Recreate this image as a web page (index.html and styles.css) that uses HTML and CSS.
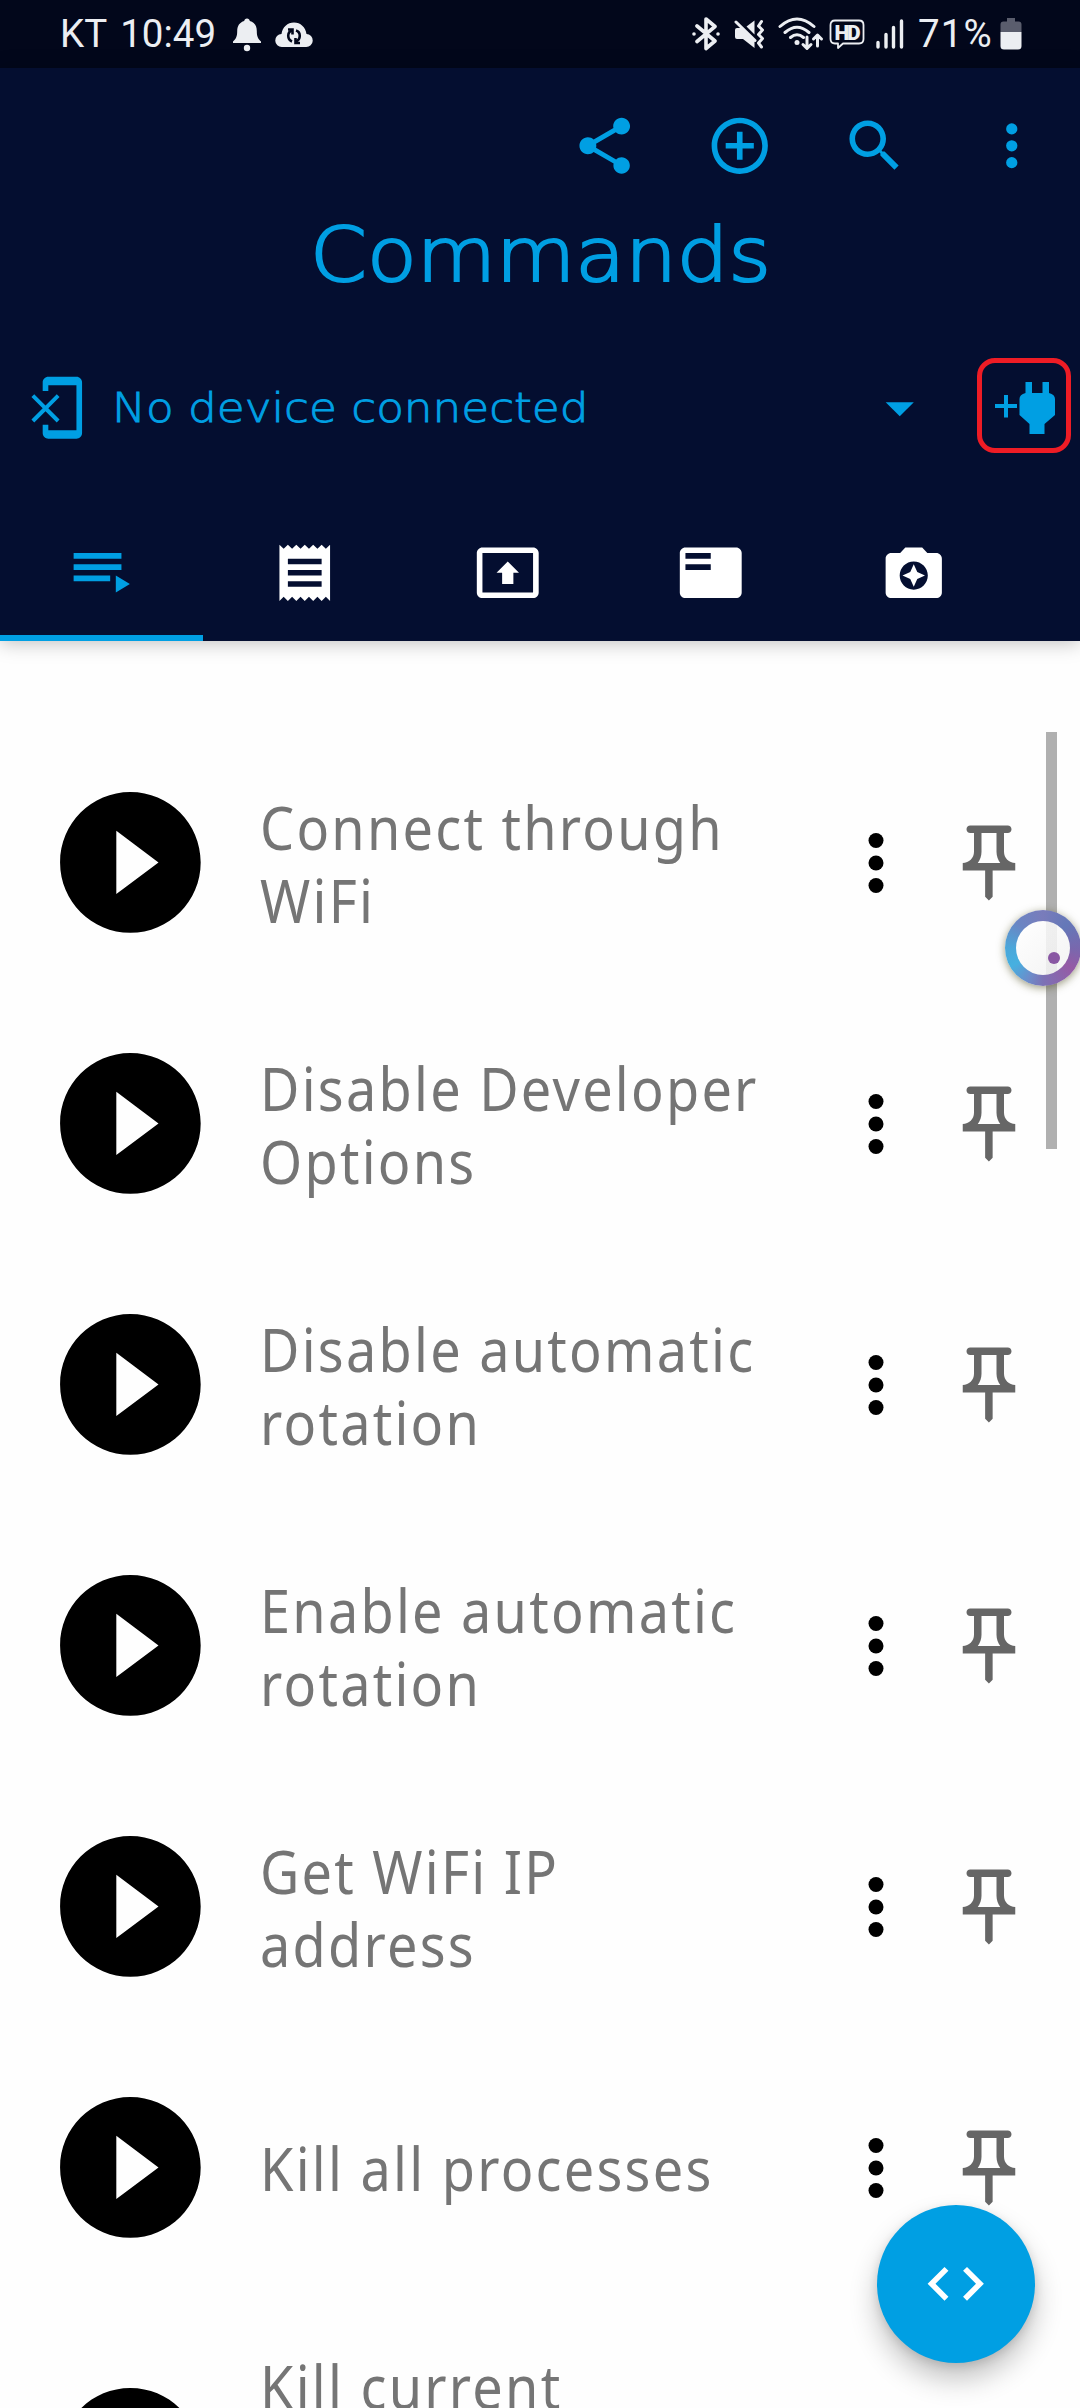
FILE: index.html
```html
<!doctype html>
<html lang="en">
  <head>
    <meta charset="UTF-8">
    <title>Commands</title>
    <link rel="stylesheet" href="styles.css">
  </head>
  <body>
    <svg class="defs">
      <symbol id="play" viewBox="0 0 24 24"><path d="M12 2C6.48 2 2 6.48 2 12s4.48 10 10 10 10-4.48 10-10S17.52 2 12 2zm-2 14.5v-9l6 4.5-6 4.5z"/></symbol>
      <symbol id="more" viewBox="0 0 24 24"><circle cx="12" cy="6" r="2"/><circle cx="12" cy="12" r="2"/><circle cx="12" cy="18" r="2"/></symbol>
      <symbol id="pin" viewBox="0 0 24 24"><path d="M14 4v5c0 1.12.37 2.16 1 3H9c.65-.86 1-1.9 1-3V4h4m3-2H7c-.55 0-1 .45-1 1s.45 1 1 1h1v5c0 1.66-1.34 3-3 3v2h5.97v7l1 1 1-1v-7H19v-2c-1.66 0-3-1.34-3-3V4h1c.55 0 1-.45 1-1s-.45-1-1-1z"/></symbol>
    </svg>

    <div class="status-bar">
      <span class="carrier">KT</span>
      <span class="time">10:49</span>
      <svg class="bell" width="30" height="34" viewBox="0 0 30 34"><path d="M15 0.500c1.600 0 2.600 1 2.800 2.400 4.600 1.300 7 5 7 10 0 5.600 1.200 7.800 4.200 10.600v1.500H1v-1.500c3-2.800 4.200-5 4.200-10.600 0-5 2.400-8.700 7-10 .200-1.400 1.200-2.400 2.800-2.400z"/><circle cx="15" cy="30" r="3.200"/></svg>
      <svg class="cloud" width="38" height="26" viewBox="0 0 38 26"><path d="M7 25a6.500 6.500 0 0 1-.500-13C7.500 5 12.500.500 19 .500S30.500 5 31.500 12A6.500 6.500 0 0 1 31 25z"/><g class="cut"><path d="M17 8.500c-5 1.500-5 9 0 11M21 8.500c5 1.500 5 9 0 11"/><path d="M13 7.500h4.500v5M25 21h-4.500v-5"/></g></svg>

      <div class="status-right">
        <svg class="bluetooth" width="28" height="34" viewBox="0 0 28 34"><path d="M5 9l18 15-9 7.500V2l9 7.500-18 15"/><circle cx="2" cy="17" r="1.800"/><circle cx="26" cy="17" r="1.800"/></svg>
        <svg class="mute" width="31" height="30" viewBox="0 0 31 30"><path d="M1 11q0-2 2-2h4l13.500 13v7L9 20H3q-2 0-2-2zM20.500 1.500v14L12.500 7.500z"/><path class="line" d="M2 3l19 18.500M27.500 2.500l-3 4.500 4 4-4 4.500 4 4-4 4.500 3 4"/></svg>
        <svg class="wifi" width="46" height="34" viewBox="0 0 46 34"><path class="line" d="M2 9.500q17-15 34 0M7 15.500q12-10.500 24 0M12.500 20.500q6.500-5.500 13 0"/><circle cx="19" cy="25.500" r="2.500"/><path class="arrows" d="M29 20v11M25 27.500l4 4 4-4M39.500 29V18.500M35.500 22l4-4 4 4"/></svg>
        <svg class="hd" width="36" height="31" viewBox="0 0 36 31"><path class="line" d="M6 1.500h24q4.500 0 4.500 4.500v14q0 4.500-4.500 4.500H14l-5 4.500v-4.500H6q-4.500 0-4.500-4.500V6q0-4.500 4.500-4.500z"/><text x="5.500" y="20.500" textLength="26">HD</text></svg>
        <svg class="signal" width="28" height="30" viewBox="0 0 28 30"><path d="M2 23.500v4.500M10 15.500V28M17.500 8.500V28M25.500 2V28"/></svg>
        <span class="percent">71%</span>
        <svg class="battery" width="22" height="32" viewBox="0 0 22 32"><path class="empty" d="M7 0h8v3.500h3.500q3 0 3 3V14H.500V6.500q0-3 3-3H7z"/><path d="M.500 14h21v14q0 3.500-3.500 3.500H4q-3.500 0-3.500-3.500z"/></svg>
      </div>
    </div>

    <header>
      <div class="toolbar">
        <svg class="icon" viewBox="0 0 24 24"><path d="M18 16.080c-.760 0-1.440.300-1.960.770L8.910 12.700c.050-.230.090-.460.090-.700s-.040-.470-.090-.700l7.050-4.110c.540.500 1.250.810 2.040.810 1.660 0 3-1.340 3-3s-1.340-3-3-3-3 1.340-3 3c0 .240.040.470.090.700L8.040 9.810C7.500 9.310 6.790 9 6 9c-1.660 0-3 1.340-3 3s1.340 3 3 3c.790 0 1.500-.310 2.040-.810l7.120 4.160c-.050.210-.080.430-.080.650 0 1.610 1.310 2.920 2.920 2.920s2.920-1.310 2.920-2.920-1.310-2.920-2.920-2.920z"/></svg>
        <svg class="icon" viewBox="0 0 24 24"><path d="M13 7h-2v4H7v2h4v4h2v-4h4v-2h-4V7zm-1-5C6.480 2 2 6.480 2 12s4.480 10 10 10 10-4.480 10-10S17.520 2 12 2zm0 18c-4.410 0-8-3.590-8-8s3.590-8 8-8 8 3.590 8 8-3.590 8-8 8z"/></svg>
        <svg class="icon" viewBox="0 0 24 24"><path d="M15.500 14h-.790l-.280-.270C15.410 12.590 16 11.110 16 9.500 16 5.910 13.090 3 9.500 3S3 5.910 3 9.500 5.910 16 9.500 16c1.610 0 3.090-.590 4.230-1.570l.270.280v.790l5 4.990L20.490 19l-4.990-5zm-6 0C7.010 14 5 11.990 5 9.500S7.010 5 9.500 5 14 7.010 14 9.500 11.990 14 9.500 14z"/></svg>
        <svg class="icon overflow"><use href="#more"/></svg>
      </div>

      <h1><span>Commands</span></h1>

      <div class="device">
        <svg class="icon" viewBox="0 0 24 24"><path d="M13 8.200l-1-1-4 4-4-4-1 1 4 4-4 4 1 1 4-4 4 4 1-1-4-4 4-4zM19 1H9c-1.100 0-2 .900-2 2v3h2V4h10v16H9v-2H7v3c0 1.100.900 2 2 2h10c1.100 0 2-.900 2-2V3c0-1.100-.900-2-2-2z"/></svg>
        <div class="device-name"><span>No device connected</span></div>
        <svg class="icon caret" viewBox="0 0 24 24"><path d="M7 10l5 5 5-5z"/></svg>
        <div class="connect">
          <svg width="60" height="52" viewBox="0 0 60 52"><path d="M9 13h4v9h9v4h-9v9.500H9V26H0v-4h9zM30.500 0h6.500v11h10.500V0H54v11q6 1.500 6 6v16L49.500 42v10H34.500V42L24.500 33V17q0-4.500 6-6z"/></svg>
        </div>
      </div>

      <nav>
        <div class="tab active"><svg class="icon" viewBox="0 0 24 24"><path d="M19 9H2v2h17V9zm0-4H2v2h17V5zM2 15h13v-2H2v2zm15-2v6l5-3-5-3z"/></svg></div>
        <div class="tab"><svg class="icon" viewBox="0 0 24 24"><path d="M18 17H6v-2h12v2zm0-4H6v-2h12v2zm0-4H6V7h12v2zM3 22l1.500-1.500L6 22l1.500-1.500L9 22l1.500-1.500L12 22l1.500-1.500L15 22l1.500-1.500L18 22l1.500-1.500L21 22V2l-1.500 1.500L18 2l-1.500 1.500L15 2l-1.500 1.500L12 2l-1.500 1.500L9 2 7.500 3.500 6 2 4.500 3.500 3 2v20z"/></svg></div>
        <div class="tab"><svg class="icon" viewBox="0 0 24 24"><path d="M21 3H3c-1.110 0-2 .890-2 2v14c0 1.110.890 2 2 2h18c1.110 0 2-.890 2-2V5c0-1.110-.890-2-2-2zm0 16.020H3V4.980h18v14.040zM10 12H8l4-4 4 4h-2v4h-4v-4z"/></svg></div>
        <div class="tab"><svg class="icon" viewBox="0 0 24 24"><path d="M21 3H3c-1.100 0-2 .900-2 2v14c0 1.100.900 2 2 2h18c1.100 0 2-.900 2-2V5c0-1.100-.900-2-2-2zm-9 8H3V9h9v2zm0-4H3V5h9v2z"/></svg></div>
        <div class="tab"><svg class="icon" viewBox="0 0 24 24"><path d="M9 3L7.170 5H4c-1.100 0-2 .900-2 2v12c0 1.100.900 2 2 2h16c1.100 0 2-.900 2-2V7c0-1.100-.900-2-2-2h-3.170L15 3H9zm3 15c-2.760 0-5-2.240-5-5s2.240-5 5-5 5 2.240 5 5-2.240 5-5 5z"/><path d="M12 17l1.250-2.750L16 13l-2.750-1.250L12 9l-1.250 2.750L8 13l2.750 1.250z"/></svg></div>
      </nav>
    </header>

    <main>
      <div class="row">
        <svg class="play"><use href="#play"/></svg>
        <p><span>Connect through<br>WiFi</span></p>
        <svg class="more"><use href="#more"/></svg>
        <svg class="pin"><use href="#pin"/></svg>
      </div>
      <div class="row">
        <svg class="play"><use href="#play"/></svg>
        <p><span>Disable Developer<br>Options</span></p>
        <svg class="more"><use href="#more"/></svg>
        <svg class="pin"><use href="#pin"/></svg>
      </div>
      <div class="row">
        <svg class="play"><use href="#play"/></svg>
        <p><span>Disable automatic<br>rotation</span></p>
        <svg class="more"><use href="#more"/></svg>
        <svg class="pin"><use href="#pin"/></svg>
      </div>
      <div class="row">
        <svg class="play"><use href="#play"/></svg>
        <p><span>Enable automatic<br>rotation</span></p>
        <svg class="more"><use href="#more"/></svg>
        <svg class="pin"><use href="#pin"/></svg>
      </div>
      <div class="row">
        <svg class="play"><use href="#play"/></svg>
        <p><span>Get WiFi IP<br>address</span></p>
        <svg class="more"><use href="#more"/></svg>
        <svg class="pin"><use href="#pin"/></svg>
      </div>
      <div class="row">
        <svg class="play"><use href="#play"/></svg>
        <p><span>Kill all processes</span></p>
        <svg class="more"><use href="#more"/></svg>
        <svg class="pin"><use href="#pin"/></svg>
      </div>
      <div class="row tall">
        <svg class="play"><use href="#play"/></svg>
        <p><span>Kill current</span></p>
      </div>
    </main>

    <div class="scrollbar"></div>
    <div class="bubble"></div>
    <div class="fab">
      <svg class="icon" viewBox="0 0 24 24"><path d="M9.400 16.600L4.800 12l4.600-4.600L8 6l-6 6 6 6 1.400-1.400zm5.200 0l4.600-4.600-4.600-4.600L16 6l6 6-6 6-1.400-1.400z"/></svg>
    </div>
  </body>
</html>
```
FILE: styles.css
```css
* {
    box-sizing: border-box;
}

html {
    overflow: hidden;
}

body {
    background: #fefefe;
    font-family: "Noto Sans", sans-serif;
    height: 2408px;
    margin: 0;
    overflow: hidden;
    position: relative;
    width: 1080px;
}

svg {
    display: block;
    fill: currentColor;
    flex-shrink: 0;
}

.defs {
    display: none;
}

.icon {
    height: 67.5px;
    width: 67.5px;
}

/* status bar */

.status-bar {
    align-items: flex-start;
    background: #02071b;
    color: #eceef2;
    display: flex;
    font-family: Roboto, sans-serif;
    font-size: 38.5px;
    height: 68px;
    line-height: 68px;
    padding: 0 58px 0 60px;
}

.time {
    margin-left: 13px;
}

.bell {
    margin: 18px 0 0 16px;
}

.cloud {
    margin: 22px 0 0 13px;
}

.cut {
    fill: none;
    stroke: #02071b;
    stroke-width: 2.6;
}

.status-right {
    display: flex;
    margin-left: auto;
}

.status-right .line,
.arrows {
    fill: none;
    stroke: currentColor;
    stroke-linecap: round;
    stroke-linejoin: round;
    stroke-width: 3;
}

.bluetooth {
    margin-top: 17px;
}

.bluetooth path {
    fill: none;
    stroke: currentColor;
    stroke-linecap: round;
    stroke-linejoin: round;
    stroke-width: 3.6;
}

.mute {
    margin: 19px 0 0 14px;
}

.wifi {
    margin: 17px 0 0 13px;
}

.hd {
    margin: 19px 0 0 5px;
}

.hd .line {
    stroke-width: 1.8;
}

.hd text {
    font-size: 21px;
    font-weight: 900;
}

.signal {
    margin: 19px 0 0 11px;
}

.signal path {
    stroke: currentColor;
    stroke-linecap: round;
    stroke-width: 3.4;
}

.percent {
    letter-spacing: 1.2px;
    margin-left: 14px;
}

.battery {
    margin: 18px 0 0 7px;
}

.empty {
    fill: #5a5d6d;
}

/* header */

header {
    background: #040e30;
    box-shadow: 0 2px 18px rgba(0, 0, 0, 0.25);
    color: #009fe3;
    height: 573px;
    position: relative;
}

.toolbar {
    align-items: center;
    display: flex;
    gap: 67.5px;
    height: 156px;
    justify-content: flex-end;
    padding-right: 34.5px;
}

.toolbar .overflow {
    margin-left: 2px;
}

h1 {
    font-family: "DejaVu Sans", sans-serif;
    font-size: 74px;
    font-weight: 200;
    height: 62px;
    line-height: 62px;
    margin: 0;
    text-align: center;
    -webkit-text-stroke: 2.2px currentColor;
}

h1 span {
    display: inline-block;
    transform: scaleX(1.1);
}

.device {
    align-items: center;
    display: flex;
    height: 95px;
    margin-top: 72px;
    padding: 4px 9px 0 23px;
}

.device-name {
    flex: 1;
    font-family: "DejaVu Sans", sans-serif;
    font-size: 41px;
    font-weight: 200;
    padding-left: 21px;
    white-space: nowrap;
    -webkit-text-stroke: 0.9px currentColor;
}

.device-name span {
    display: inline-block;
    transform: scaleX(1.105);
    transform-origin: left;
}

.connect {
    align-items: center;
    border: 5px solid #ee1c25;
    border-radius: 18px;
    display: flex;
    height: 95px;
    justify-content: center;
    margin: -4px 0 0 44px;
    padding-left: 1px;
    padding-top: 5px;
    width: 94px;
}

nav {
    display: flex;
    height: 136px;
    margin-top: 52px;
}

.tab {
    color: #fff;
    display: flex;
    height: 136px;
    justify-content: center;
    padding-top: 34px;
    width: 203px;
}

.tab.active {
    border-bottom: 6px solid #009fe3;
    color: #009fe3;
}

/* list */

main {
    height: 1767px;
    overflow: hidden;
    padding-top: 91px;
}

.row {
    align-items: center;
    display: flex;
    height: 261px;
    padding: 0 46px;
}

.row p {
    color: #757575;
    flex: 1;
    font-size: 60px;
    letter-spacing: 2.5px;
    line-height: 73px;
    margin: 0;
    padding: 2px 0 0 45px;
    white-space: nowrap;
}

.row p span {
    display: inline-block;
    transform: scaleX(0.9);
    transform-origin: left;
}

.play {
    height: 168.75px;
    width: 168.75px;
}

.more {
    height: 90px;
    width: 90px;
}

.pin {
    color: #666;
    height: 90px;
    margin-left: 23px;
    width: 90px;
}

.tall {
    height: 320px;
}

.tall p {
    margin-bottom: 146px;
}

/* overlays */

.scrollbar {
    background: #b0b0b0;
    height: 417px;
    left: 1046px;
    position: absolute;
    top: 732px;
    width: 11px;
}

.bubble {
    background: conic-gradient(from 0deg, #797cbb, #6478b8 45deg, #7868ae 90deg, #955aa5 125deg, #7c72b5 180deg, #6c8cca 205deg, #46b0e0 240deg, #4ba7da 270deg, #6b85c3 315deg, #797cbb);
    border-radius: 50%;
    box-shadow: 0 2px 8px rgba(70, 70, 20, 0.55);
    height: 76px;
    left: 1005px;
    position: absolute;
    top: 910px;
    width: 76px;
}

.bubble::before {
    background: linear-gradient(90deg, transparent 30px, rgba(0, 0, 0, 0.045) 30px, rgba(0, 0, 0, 0.045) 41px, transparent 41px), linear-gradient(135deg, #fff, #f3f3f3);
    border-radius: 50%;
    content: "";
    inset: 11px;
    position: absolute;
}

.bubble::after {
    background: #8957a3;
    border-radius: 50%;
    content: "";
    height: 12px;
    left: 43px;
    position: absolute;
    top: 42px;
    width: 12px;
}

.fab {
    align-items: center;
    background: #009fe3;
    border-radius: 50%;
    bottom: 45px;
    box-shadow: 0 16px 28px rgba(0, 0, 0, 0.24), 0 3px 10px rgba(0, 0, 0, 0.12);
    color: #fff;
    display: flex;
    height: 158px;
    justify-content: center;
    position: absolute;
    right: 45px;
    width: 158px;
}
```
